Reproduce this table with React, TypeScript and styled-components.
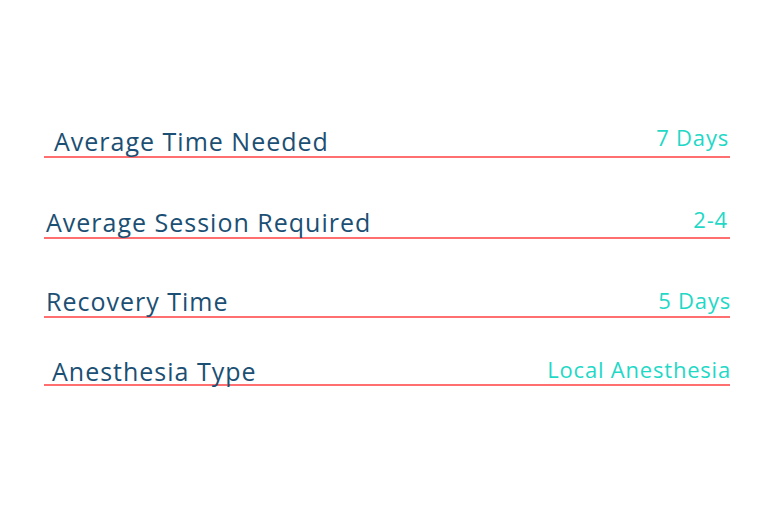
import React from "react";
import styled, { createGlobalStyle } from "styled-components";

const Global = createGlobalStyle`
  html, body { margin: 0; padding: 0; background: #ffffff; }
  body { width: 768px; height: 512px; overflow: hidden; }
`;

const Page = styled.main`
  width: 768px;
  height: 512px;
  box-sizing: border-box;
  padding: 118px 38px 0 44px;
  background: #ffffff;
  font-family: "Open Sans", "Noto Sans", sans-serif;
`;

const List = styled.dl`
  margin: 0;
  display: flex;
  flex-direction: column;
`;

const Row = styled.div<{ $gap: number }>`
  display: flex;
  justify-content: space-between;
  align-items: flex-end;
  height: 40px;
  box-sizing: border-box;
  margin-top: ${(p) => p.$gap}px;
  border-bottom: 2px solid #ff6f6f;
`;

const Label = styled.dt<{ $indent: number; $lift: number }>`
  margin: 0;
  padding-left: ${(p) => p.$indent}px;
  padding-bottom: ${(p) => p.$lift}px;
  font-size: 25px;
  line-height: 1;
  color: #1b4f73;
  letter-spacing: 1px;
`;

const Value = styled.dd<{ $lift: number; $inset: number }>`
  margin: 0 ${(p) => p.$inset - 1}px 0 0;
  padding-bottom: ${(p) => p.$lift}px;
  font-size: 22px;
  line-height: 1;
  color: #1fd8c6;
  letter-spacing: 0.8px;
`;

const rows = [
  { label: "Average Time Needed", value: "7 Days", gap: 0, indent: 10, labelLift: 2, valueLift: 8, inset: 2 },
  { label: "Average Session Required", value: "2-4", gap: 41, indent: 2, labelLift: 2, valueLift: 7, inset: 3 },
  { label: "Recovery Time", value: "5 Days", gap: 39, indent: 2, labelLift: 2, valueLift: 5, inset: 0 },
  { label: "Anesthesia Type", value: "Local Anesthesia", gap: 28, indent: 8, labelLift: 0, valueLift: 4, inset: 0 },
];

export default function App() {
  return (
    <>
      <Global />
      <Page>
        <List>
          {rows.map((r) => (
            <Row key={r.label} $gap={r.gap}>
              <Label $indent={r.indent} $lift={r.labelLift}>{r.label}</Label>
              <Value $lift={r.valueLift} $inset={r.inset}>{r.value}</Value>
            </Row>
          ))}
        </List>
      </Page>
    </>
  );
}
